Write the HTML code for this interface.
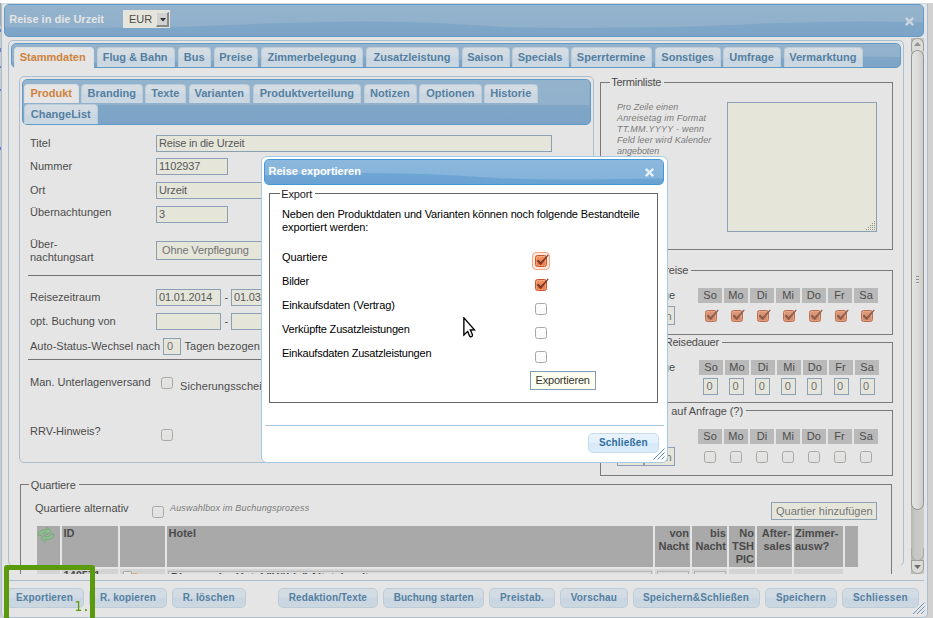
<!DOCTYPE html>
<html lang="de"><head><meta charset="utf-8"><title>Reise in die Urzeit</title><style>
*{box-sizing:border-box;margin:0;padding:0}
html,body{width:933px;height:618px;overflow:hidden}
body{position:relative;background:#fff;font-family:"Liberation Sans",sans-serif;font-size:11px;color:#222}
.a{position:absolute}
.t{white-space:nowrap;display:block}
.inp{background:#fffff0;border:1px solid #7f9db9}
.hdr{background:linear-gradient(#72a9d7,#6aa3d3);border:1px solid #4297d7;border-radius:5px;overflow:hidden}
.hdr i{position:absolute;left:0;top:0;right:0;bottom:0;background:linear-gradient(#8cb8dd,#83b1d9);filter:blur(.6px)}
.tab{background:linear-gradient(#e9f4fd 0%,#e2f0fc 48%,#d7e9f9 52%,#dbecfa 100%);border:1px solid #c5dbec;border-bottom:none;border-radius:4px 4px 0 0}
.tab.on{background:#fff;border-color:#f3f7fa}
.btn{background:linear-gradient(#e9f4fd 0%,#e2f0fc 48%,#d7e9f9 52%,#dbecfa 100%);border:1px solid #c5dbec;border-radius:5px}
.fs{border:1px solid #666}
.th{background:#a9a9a9}
.dh{background:#c0c0c0}
.cb{width:12px;height:12px;border:1px solid #aca8a2;border-radius:2.5px;background:linear-gradient(#fff,#f8f8f8)}
.cbo{width:12px;height:12px;border:1px solid #c8552b;border-radius:2.5px;background:linear-gradient(#f4956a,#ec7845);box-shadow:inset 0 0 0 1px rgba(255,190,150,.45)}
</style></head><body>
<div class="a" style="left:0px;top:3px;width:933px;height:615px;background:#e3e3e3"></div>
<div class="a" style="left:0px;top:3px;width:1px;height:615px;background:linear-gradient(#a7a7a7 0,#a7a7a7 22px,#dadada 24px,#dadada 100%)"></div>
<div class="a" style="left:0px;top:29px;width:1px;height:3px;background:#5a66d8"></div>
<div class="a" style="left:0px;top:48px;width:1px;height:4px;background:#5a66d8"></div>
<div class="a" style="left:0px;top:66px;width:1px;height:2px;background:#5a66d8"></div>
<div class="a" style="left:0px;top:89px;width:1px;height:2px;background:#5a66d8"></div>
<div class="a" style="left:0px;top:147px;width:1px;height:3px;background:#5a66d8"></div>
<div class="a" id="dlg" style="left:1px;top:3px;width:927px;height:615px;border:1px solid #a6c9e2;border-top-color:#e4edf5;border-radius:3px 3px 5px 5px;background:#fff;overflow:hidden"></div>
<div class="a hdr" style="left:4px;top:4px;width:920px;height:33px;"><i style="clip-path:polygon(0 0,100% 0,100.0% 17.5px,97.8% 17.0px,95.7% 16.7px,93.5% 16.5px,91.3% 16.7px,89.1% 16.9px,87.0% 17.4px,84.8% 17.9px,82.6% 18.6px,80.4% 19.4px,78.3% 20.3px,76.1% 21.0px,73.9% 21.7px,71.7% 22.0px,69.6% 22.3px,67.4% 22.5px,65.2% 22.7px,63.0% 22.9px,60.9% 23.0px,58.7% 22.8px,56.5% 22.4px,54.3% 21.9px,52.2% 20.8px,50.0% 19.5px,47.8% 18.4px,45.7% 17.5px,43.5% 17.0px,41.3% 16.7px,39.1% 16.5px,37.0% 16.7px,34.8% 16.9px,32.6% 17.4px,30.4% 17.9px,28.3% 18.6px,26.1% 19.4px,23.9% 20.3px,21.7% 21.0px,19.6% 21.7px,17.4% 22.0px,15.2% 22.3px,13.0% 22.5px,10.9% 22.7px,8.7% 22.9px,6.5% 23.0px,4.3% 22.8px,2.2% 22.4px,0.0% 21.9px)"></i></div>
<span class="a t" style="left: 9.2px; top: 14px; font-size: 11px; line-height: 11px; height: 11px; font-weight: bold; color: rgb(255, 255, 255); letter-spacing: 0.002px;">Reise in die Urzeit</span>
<div class="a" style="left:123px;top:10px;width:47px;height:18px;background:#fffff0;border:1px solid #fffff8"></div>
<span class="a t" style="left: 129px; top: 14px; font-size: 11px; line-height: 11px; height: 11px; color: rgb(34, 34, 34); letter-spacing: -0.005px;">EUR</span>
<div class="a" style="left:156px;top:12px;width:13px;height:14.6px;background:#e2e2e2;border-style:solid;border-width:1px 2px 2px 1px;border-color:#fff #7a7a7a #7a7a7a #fff"></div>
<svg class="a" style="left:159.5px;top:18px" width="6" height="4"><path d="M0 0h6L3 3.4z" fill="#000"></path></svg>
<svg class="a" style="left:904px;top:16px" width="11" height="11" viewBox="0 0 11 11"><path d="M1.8 1.8L9.2 9.2M9.2 1.8L1.8 9.2" stroke="#d8e7f3" stroke-width="2.5" stroke-linecap="butt"></path></svg>
<div class="a" id="sc" style="left:0;top:38px;width:911px;height:536px;overflow:hidden"><div class="a" style="left:0;top:-38px;width:933px;height:700px">
<div class="a" style="left:8px;top:40px;width:896px;height:526px;border:1px solid #a6c9e2;border-radius:5px"></div>
<div class="a" style="left:11px;top:560px;width:890px;height:8px;background:#fff"></div>
<div class="a hdr" style="left:11px;top:43px;width:890px;height:25px;"><i style="clip-path:polygon(0 0,100% 0,100.0% 13.1px,97.7% 12.8px,95.5% 12.5px,93.2% 12.7px,90.9% 12.8px,88.6% 13.3px,86.4% 13.8px,84.1% 14.5px,81.8% 15.3px,79.5% 16.1px,77.3% 16.9px,75.0% 17.6px,72.7% 18.0px,70.5% 18.3px,68.2% 18.5px,65.9% 18.7px,63.6% 18.8px,61.4% 19.0px,59.1% 18.8px,56.8% 18.4px,54.5% 17.9px,52.3% 16.8px,50.0% 15.5px,47.7% 14.4px,45.5% 13.5px,43.2% 13.0px,40.9% 12.7px,38.6% 12.6px,36.4% 12.7px,34.1% 13.0px,31.8% 13.5px,29.5% 14.0px,27.3% 14.7px,25.0% 15.5px,22.7% 16.4px,20.5% 17.1px,18.2% 17.8px,15.9% 18.1px,13.6% 18.4px,11.4% 18.6px,9.1% 18.7px,6.8% 18.9px,4.5% 18.9px,2.3% 18.8px,0.0% 18.3px)"></i></div>
<div class="a tab on" style="left:14.1px;top:47px;width:79.9px;height:21px;"></div>
<span class="a t" style="left: 19.68px; top: 51.5px; font-size: 11px; line-height: 11px; height: 11px; font-weight: bold; color: rgb(225, 112, 9); letter-spacing: 0px;">Stammdaten</span>
<div class="a tab" style="left:96.6px;top:47px;width:78.2px;height:20px;"></div>
<span class="a t" style="left: 102.81px; top: 51.5px; font-size: 11px; line-height: 11px; height: 11px; font-weight: bold; color: rgb(46, 110, 158); letter-spacing: 0px;">Flug &amp; Bahn</span>
<div class="a tab" style="left:178px;top:47px;width:33.3px;height:20px;"></div>
<span class="a t" style="left: 183.76px; top: 51.5px; font-size: 11px; line-height: 11px; height: 11px; font-weight: bold; color: rgb(46, 110, 158); letter-spacing: 0px;">Bus</span>
<div class="a tab" style="left:214.1px;top:47px;width:44.4px;height:20px;"></div>
<span class="a t" style="left: 219.27px; top: 51.5px; font-size: 11px; line-height: 11px; height: 11px; font-weight: bold; color: rgb(46, 110, 158); letter-spacing: 0.005px;">Preise</span>
<div class="a tab" style="left:261.2px;top:47px;width:102.3px;height:20px;"></div>
<span class="a t" style="left: 267.52px; top: 51.5px; font-size: 11px; line-height: 11px; height: 11px; font-weight: bold; color: rgb(46, 110, 158); letter-spacing: 0.002px;">Zimmerbelegung</span>
<div class="a tab" style="left:366.3px;top:47px;width:92.4px;height:20px;"></div>
<span class="a t" style="left: 373.48px; top: 51.5px; font-size: 11px; line-height: 11px; height: 11px; font-weight: bold; color: rgb(46, 110, 158); letter-spacing: 0.001px;">Zusatzleistung</span>
<div class="a tab" style="left:461.5px;top:47px;width:48.4px;height:20px;"></div>
<span class="a t" style="left: 467.15px; top: 51.5px; font-size: 11px; line-height: 11px; height: 11px; font-weight: bold; color: rgb(46, 110, 158); letter-spacing: 0.002px;">Saison</span>
<div class="a tab" style="left:512.4px;top:47px;width:56.4px;height:20px;"></div>
<span class="a t" style="left: 517.76px; top: 51.5px; font-size: 11px; line-height: 11px; height: 11px; font-weight: bold; color: rgb(46, 110, 158); letter-spacing: 0.006px;">Specials</span>
<div class="a tab" style="left:571.3px;top:47px;width:80.6px;height:20px;"></div>
<span class="a t" style="left: 576.85px; top: 51.5px; font-size: 11px; line-height: 11px; height: 11px; font-weight: bold; color: rgb(46, 110, 158); letter-spacing: 0.001px;">Sperrtermine</span>
<div class="a tab" style="left:654.9px;top:47px;width:66.5px;height:20px;"></div>
<span class="a t" style="left: 661.35px; top: 51.5px; font-size: 11px; line-height: 11px; height: 11px; font-weight: bold; color: rgb(46, 110, 158); letter-spacing: 0.001px;">Sonstiges</span>
<div class="a tab" style="left:723.2px;top:47px;width:57.9px;height:20px;"></div>
<span class="a t" style="left: 729.34px; top: 51.5px; font-size: 11px; line-height: 11px; height: 11px; font-weight: bold; color: rgb(46, 110, 158); letter-spacing: -0.001px;">Umfrage</span>
<div class="a tab" style="left:783.6px;top:47px;width:79.4px;height:20px;"></div>
<span class="a t" style="left: 789.17px; top: 51.5px; font-size: 11px; line-height: 11px; height: 11px; font-weight: bold; color: rgb(46, 110, 158); letter-spacing: 0.002px;">Vermarktung</span>
<div class="a" style="left:19px;top:76px;width:575px;height:387px;border:1px solid #a6c9e2;border-radius:5px"></div>
<div class="a hdr" style="left:21.5px;top:79px;width:569px;height:46px;"><i style="clip-path:polygon(0 0,100% 0,100.0% 25.0px,96.4% 25.0px,92.9% 25.0px,89.3% 25.0px,85.7% 25.0px,82.1% 25.0px,78.6% 25.0px,75.0% 25.0px,71.4% 25.0px,67.9% 25.0px,64.3% 25.0px,60.7% 25.0px,57.1% 25.0px,53.6% 25.0px,50.0% 25.0px,46.4% 25.0px,42.9% 25.0px,39.3% 25.0px,35.7% 25.0px,32.1% 25.0px,28.6% 25.0px,25.0% 25.0px,21.4% 25.0px,17.9% 25.0px,14.3% 25.0px,10.7% 25.0px,7.1% 25.0px,3.6% 25.0px,0.0% 25.0px)"></i></div>
<div class="a tab on" style="left:24.4px;top:84.4px;width:54.2px;height:18.6px;"></div>
<span class="a t" style="left: 30.42px; top: 87.6px; font-size: 11px; line-height: 11px; height: 11px; font-weight: bold; color: rgb(225, 112, 9); letter-spacing: 0px;">Produkt</span>
<div class="a tab" style="left:81.1px;top:84.4px;width:61.9px;height:18.6px;"></div>
<span class="a t" style="left: 87.61px; top: 87.6px; font-size: 11px; line-height: 11px; height: 11px; font-weight: bold; color: rgb(46, 110, 158); letter-spacing: 0px;">Branding</span>
<div class="a tab" style="left:145.3px;top:84.4px;width:40.6px;height:18.6px;"></div>
<span class="a t" style="left: 151.33px; top: 87.6px; font-size: 11px; line-height: 11px; height: 11px; font-weight: bold; color: rgb(46, 110, 158); letter-spacing: 0.004px;">Texte</span>
<div class="a tab" style="left:188.9px;top:84.4px;width:61.3px;height:18.6px;"></div>
<span class="a t" style="left: 194.48px; top: 87.6px; font-size: 11px; line-height: 11px; height: 11px; font-weight: bold; color: rgb(46, 110, 158); letter-spacing: 0.002px;">Varianten</span>
<div class="a tab" style="left:253.2px;top:84.4px;width:107.8px;height:18.6px;"></div>
<span class="a t" style="left: 259.72px; top: 87.6px; font-size: 11px; line-height: 11px; height: 11px; font-weight: bold; color: rgb(46, 110, 158); letter-spacing: 0.002px;">Produktverteilung</span>
<div class="a tab" style="left:363.5px;top:84.4px;width:53.4px;height:18.6px;"></div>
<span class="a t" style="left: 370.04px; top: 87.6px; font-size: 11px; line-height: 11px; height: 11px; font-weight: bold; color: rgb(46, 110, 158); letter-spacing: -0.002px;">Notizen</span>
<div class="a tab" style="left:419.4px;top:84.4px;width:62.5px;height:18.6px;"></div>
<span class="a t" style="left: 426.21px; top: 87.6px; font-size: 11px; line-height: 11px; height: 11px; font-weight: bold; color: rgb(46, 110, 158); letter-spacing: 0px;">Optionen</span>
<div class="a tab" style="left:484.4px;top:84.4px;width:53.4px;height:18.6px;"></div>
<span class="a t" style="left: 490.32px; top: 87.6px; font-size: 11px; line-height: 11px; height: 11px; font-weight: bold; color: rgb(46, 110, 158); letter-spacing: 0px;">Historie</span>
<div class="a tab" style="left:24.4px;top:104px;width:73.3px;height:19.5px;"></div>
<span class="a t" style="left: 30.8px; top: 108.7px; font-size: 11px; line-height: 11px; height: 11px; font-weight: bold; color: rgb(46, 110, 158); letter-spacing: 0px;">ChangeList</span>
<span class="a t" style="left: 30px; top: 138px; font-size: 11px; line-height: 11px; height: 11px; letter-spacing: 0.001px;">Titel</span>
<div class="a inp" style="left:156px;top:135px;width:396px;height:17px;"></div><span class="a t" style="left: 159px; top: 137.8px; font-size: 11px; line-height: 11px; height: 11px; color: rgb(51, 51, 51); letter-spacing: -0.209px;">Reise in die Urzeit</span>
<span class="a t" style="left: 30px; top: 161px; font-size: 11px; line-height: 11px; height: 11px; letter-spacing: -0.002px;">Nummer</span>
<div class="a inp" style="left:156px;top:158px;width:72px;height:17px;"></div><span class="a t" style="left: 159px; top: 160.8px; font-size: 11px; line-height: 11px; height: 11px; color: rgb(51, 51, 51); letter-spacing: -0.118px;">1102937</span>
<span class="a t" style="left: 30px; top: 185px; font-size: 11px; line-height: 11px; height: 11px; letter-spacing: 0px;">Ort</span>
<div class="a inp" style="left:156px;top:182px;width:396px;height:17px;"></div><span class="a t" style="left: 159px; top: 184.8px; font-size: 11px; line-height: 11px; height: 11px; color: rgb(51, 51, 51); letter-spacing: -0.122px;">Urzeit</span>
<span class="a t" style="left: 30px; top: 207px; font-size: 11px; line-height: 11px; height: 11px; letter-spacing: 0.005px;">Übernachtungen</span>
<div class="a inp" style="left:156px;top:206px;width:72px;height:17px;"></div><span class="a t" style="left: 159px; top: 208.8px; font-size: 11px; line-height: 11px; height: 11px; color: rgb(51, 51, 51); letter-spacing: -0.125px;">3</span>
<span class="a t" style="left: 30px; top: 239px; font-size: 11px; line-height: 11px; height: 11px; letter-spacing: -0.003px;">Über-</span>
<span class="a t" style="left: 30px; top: 251.5px; font-size: 11px; line-height: 11px; height: 11px; letter-spacing: 0.004px;">nachtungsart</span>
<div class="a inp" style="left:156px;top:241px;width:200px;height:19px;"></div>
<span class="a t" style="left: 162px; top: 245px; font-size: 11px; line-height: 11px; height: 11px; color: rgb(90, 90, 90); letter-spacing: -0.125px;">Ohne Verpflegung</span>
<div class="a" style="left:28px;top:275px;width:562px;height:1px;background:#5c5c5c"></div>
<span class="a t" style="left: 30px; top: 292px; font-size: 11px; line-height: 11px; height: 11px; letter-spacing: 0px;">Reisezeitraum</span>
<div class="a inp" style="left:156px;top:289px;width:65px;height:17px;"></div><span class="a t" style="left: 159px; top: 291.8px; font-size: 11px; line-height: 11px; height: 11px; color: rgb(51, 51, 51); letter-spacing: -0.176px;">01.01.2014</span>
<span class="a t" style="left: 224.5px; top: 292px; font-size: 11px; line-height: 11px; height: 11px; letter-spacing: -0.012px;">-</span>
<div class="a inp" style="left:231px;top:289px;width:65px;height:17px;"></div><span class="a t" style="left: 234px; top: 291.8px; font-size: 11px; line-height: 11px; height: 11px; color: rgb(51, 51, 51); letter-spacing: -0.176px;">01.03.2014</span>
<span class="a t" style="left: 30px; top: 316px; font-size: 11px; line-height: 11px; height: 11px; letter-spacing: 0.006px;">opt. Buchung von</span>
<div class="a inp" style="left:156px;top:313px;width:65px;height:17px;"></div>
<span class="a t" style="left: 224.5px; top: 316px; font-size: 11px; line-height: 11px; height: 11px; letter-spacing: -0.012px;">-</span>
<div class="a inp" style="left:231px;top:313px;width:65px;height:17px;"></div>
<span class="a t" style="left: 30px; top: 341px; font-size: 11px; line-height: 11px; height: 11px; letter-spacing: 0.003px;">Auto-Status-Wechsel nach</span>
<div class="a inp" style="left:163px;top:338px;width:18px;height:17px;"></div><span class="a t" style="left: 167px; top: 340.8px; font-size: 11px; line-height: 11px; height: 11px; color: rgb(85, 85, 85); letter-spacing: -0.125px;">0</span>
<span class="a t" style="left: 184.5px; top: 341px; font-size: 11px; line-height: 11px; height: 11px; letter-spacing: 0.006px;">Tagen bezogen</span>
<div class="a" style="left:28px;top:359px;width:562px;height:1px;background:#5c5c5c"></div>
<span class="a t" style="left: 30px; top: 376.5px; font-size: 11px; line-height: 11px; height: 11px; letter-spacing: 0.003px;">Man. Unterlagenversand</span>
<div class="a cb" style="left:161px;top:377px;width:12px;height:12px;"></div>
<span class="a t" style="left: 180px; top: 381px; font-size: 11px; line-height: 11px; height: 11px; letter-spacing: 0.072px;">Sicherungsschein</span>
<span class="a t" style="left: 30px; top: 426px; font-size: 11px; line-height: 11px; height: 11px; letter-spacing: -0.002px;">RRV-Hinweis?</span>
<div class="a cb" style="left:161px;top:429px;width:12px;height:12px;"></div>
<div class="a fs" style="left:600px;top:82px;width:293px;height:168px;"></div><div class="a" style="left:609.5px;top:76px;width:54.5px;height:13px;background:#fff"></div><span class="a t" style="left: 611.2px; top: 77px; font-size: 11px; line-height: 11px; height: 11px; letter-spacing: -0.234px;">Terminliste</span>
<span class="a t" style="left: 617px; top: 102.5px; font-size: 9px; line-height: 9px; height: 9px; font-style: italic; color: rgb(102, 102, 102); letter-spacing: 0.05px;">Pro Zeile einen</span>
<span class="a t" style="left: 617px; top: 113.5px; font-size: 9px; line-height: 9px; height: 9px; font-style: italic; color: rgb(102, 102, 102); letter-spacing: 0.163px;">Anreisetag im Format</span>
<span class="a t" style="left: 617px; top: 124.5px; font-size: 9px; line-height: 9px; height: 9px; font-style: italic; color: rgb(102, 102, 102); letter-spacing: 0.223px;">TT.MM.YYYY - wenn</span>
<span class="a t" style="left: 617px; top: 135.5px; font-size: 9px; line-height: 9px; height: 9px; font-style: italic; color: rgb(102, 102, 102); letter-spacing: 0.076px;">Feld leer wird Kalender</span>
<span class="a t" style="left: 617px; top: 146.5px; font-size: 9px; line-height: 9px; height: 9px; font-style: italic; color: rgb(102, 102, 102); letter-spacing: -0.027px;">angeboten</span>
<div class="a inp" style="left:727px;top:102px;width:150px;height:130px;"></div>
<svg class="a" style="left:866px;top:221px" width="10" height="10"><g fill="#8a8a80"><rect x="8" y="0" width="1" height="1"></rect><rect x="6" y="2" width="1" height="1"></rect><rect x="8" y="2" width="1" height="1"></rect><rect x="4" y="4" width="1" height="1"></rect><rect x="6" y="4" width="1" height="1"></rect><rect x="8" y="4" width="1" height="1"></rect><rect x="2" y="6" width="1" height="1"></rect><rect x="4" y="6" width="1" height="1"></rect><rect x="6" y="6" width="1" height="1"></rect><rect x="8" y="6" width="1" height="1"></rect><rect x="0" y="8" width="1" height="1"></rect><rect x="2" y="8" width="1" height="1"></rect><rect x="4" y="8" width="1" height="1"></rect><rect x="6" y="8" width="1" height="1"></rect><rect x="8" y="8" width="1" height="1"></rect></g></svg>
<div class="a fs" style="left:600px;top:270px;width:293px;height:65px;"></div><div class="a" style="left:650.6px;top:264px;width:40.5px;height:13px;background:#fff"></div><span class="a t" style="left: 652.3px; top: 265px; font-size: 11px; line-height: 11px; height: 11px; letter-spacing: -0.185px;">Anreise</span>
<span class="a t" style="left: 651.22px; top: 290px; font-size: 11px; line-height: 11px; height: 11px; letter-spacing: 0.005px;">Tage</span>
<div class="a inp" style="left:617px;top:306px;width:58px;height:19px;"></div><span class="a t" style="left: 665.5px; top: 310.8px; font-size: 11px; line-height: 11px; height: 11px; color: rgb(85, 85, 85); letter-spacing: -0.125px;">n</span>
<div class="a dh" style="left:698px;top:288px;width:24px;height:15px;"></div><span class="a t" style="left: 703.3px; top: 289.7px; font-size: 11px; line-height: 11px; height: 11px; letter-spacing: 0.001px;">So</span><div class="a dh" style="left:724px;top:288px;width:24px;height:15px;"></div><span class="a t" style="left: 728.3px; top: 289.7px; font-size: 11px; line-height: 11px; height: 11px; letter-spacing: -0.001px;">Mo</span><div class="a dh" style="left:750px;top:288px;width:24px;height:15px;"></div><span class="a t" style="left: 756.8px; top: 289.7px; font-size: 11px; line-height: 11px; height: 11px; letter-spacing: -0.005px;">Di</span><div class="a dh" style="left:776px;top:288px;width:24px;height:15px;"></div><span class="a t" style="left: 782.3px; top: 289.7px; font-size: 11px; line-height: 11px; height: 11px; letter-spacing: -0.01px;">Mi</span><div class="a dh" style="left:802px;top:288px;width:24px;height:15px;"></div><span class="a t" style="left: 806.8px; top: 289.7px; font-size: 11px; line-height: 11px; height: 11px; letter-spacing: -0.001px;">Do</span><div class="a dh" style="left:828px;top:288px;width:24px;height:15px;"></div><span class="a t" style="left: 834.3px; top: 289.7px; font-size: 11px; line-height: 11px; height: 11px; letter-spacing: -0.005px;">Fr</span><div class="a dh" style="left:854px;top:288px;width:24px;height:15px;"></div><span class="a t" style="left: 859.3px; top: 289.7px; font-size: 11px; line-height: 11px; height: 11px; letter-spacing: 0.001px;">Sa</span>
<div class="a cbo" style="left:705px;top:310px;width:12px;height:12px;"><svg width="16" height="14" viewBox="0 -2 16 14" style="position:absolute;left:-1px;top:-3px;overflow:visible"><path d="M1.5 6.1L3.2 4.4L5.6 7.1L12.9 -0.6L13.7 0.2L5.8 10.2Z" fill="#7d3b27"></path></svg></div>
<div class="a cbo" style="left:731px;top:310px;width:12px;height:12px;"><svg width="16" height="14" viewBox="0 -2 16 14" style="position:absolute;left:-1px;top:-3px;overflow:visible"><path d="M1.5 6.1L3.2 4.4L5.6 7.1L12.9 -0.6L13.7 0.2L5.8 10.2Z" fill="#7d3b27"></path></svg></div>
<div class="a cbo" style="left:757px;top:310px;width:12px;height:12px;"><svg width="16" height="14" viewBox="0 -2 16 14" style="position:absolute;left:-1px;top:-3px;overflow:visible"><path d="M1.5 6.1L3.2 4.4L5.6 7.1L12.9 -0.6L13.7 0.2L5.8 10.2Z" fill="#7d3b27"></path></svg></div>
<div class="a cbo" style="left:783px;top:310px;width:12px;height:12px;"><svg width="16" height="14" viewBox="0 -2 16 14" style="position:absolute;left:-1px;top:-3px;overflow:visible"><path d="M1.5 6.1L3.2 4.4L5.6 7.1L12.9 -0.6L13.7 0.2L5.8 10.2Z" fill="#7d3b27"></path></svg></div>
<div class="a cbo" style="left:809px;top:310px;width:12px;height:12px;"><svg width="16" height="14" viewBox="0 -2 16 14" style="position:absolute;left:-1px;top:-3px;overflow:visible"><path d="M1.5 6.1L3.2 4.4L5.6 7.1L12.9 -0.6L13.7 0.2L5.8 10.2Z" fill="#7d3b27"></path></svg></div>
<div class="a cbo" style="left:835px;top:310px;width:12px;height:12px;"><svg width="16" height="14" viewBox="0 -2 16 14" style="position:absolute;left:-1px;top:-3px;overflow:visible"><path d="M1.5 6.1L3.2 4.4L5.6 7.1L12.9 -0.6L13.7 0.2L5.8 10.2Z" fill="#7d3b27"></path></svg></div>
<div class="a cbo" style="left:861px;top:310px;width:12px;height:12px;"><svg width="16" height="14" viewBox="0 -2 16 14" style="position:absolute;left:-1px;top:-3px;overflow:visible"><path d="M1.5 6.1L3.2 4.4L5.6 7.1L12.9 -0.6L13.7 0.2L5.8 10.2Z" fill="#7d3b27"></path></svg></div>
<div class="a fs" style="left:600px;top:342px;width:293px;height:61px;"></div><div class="a" style="left:663px;top:336px;width:58.8px;height:13px;background:#fff"></div><span class="a t" style="left: 664.7px; top: 337.2px; font-size: 11px; line-height: 11px; height: 11px; letter-spacing: -0.197px;">Reisedauer</span>
<span class="a t" style="left: 651.22px; top: 362px; font-size: 11px; line-height: 11px; height: 11px; letter-spacing: 0.005px;">Tage</span>
<div class="a dh" style="left:699px;top:360px;width:24px;height:15px;"></div><span class="a t" style="left: 704.3px; top: 361.7px; font-size: 11px; line-height: 11px; height: 11px; letter-spacing: 0.001px;">So</span><div class="a dh" style="left:725px;top:360px;width:24px;height:15px;"></div><span class="a t" style="left: 729.3px; top: 361.7px; font-size: 11px; line-height: 11px; height: 11px; letter-spacing: -0.001px;">Mo</span><div class="a dh" style="left:751px;top:360px;width:24px;height:15px;"></div><span class="a t" style="left: 757.8px; top: 361.7px; font-size: 11px; line-height: 11px; height: 11px; letter-spacing: -0.005px;">Di</span><div class="a dh" style="left:777px;top:360px;width:24px;height:15px;"></div><span class="a t" style="left: 783.3px; top: 361.7px; font-size: 11px; line-height: 11px; height: 11px; letter-spacing: -0.01px;">Mi</span><div class="a dh" style="left:803px;top:360px;width:24px;height:15px;"></div><span class="a t" style="left: 807.8px; top: 361.7px; font-size: 11px; line-height: 11px; height: 11px; letter-spacing: -0.001px;">Do</span><div class="a dh" style="left:829px;top:360px;width:24px;height:15px;"></div><span class="a t" style="left: 835.3px; top: 361.7px; font-size: 11px; line-height: 11px; height: 11px; letter-spacing: -0.005px;">Fr</span><div class="a dh" style="left:855px;top:360px;width:24px;height:15px;"></div><span class="a t" style="left: 860.3px; top: 361.7px; font-size: 11px; line-height: 11px; height: 11px; letter-spacing: 0.001px;">Sa</span>
<div class="a inp" style="left:703.0px;top:378px;width:15px;height:17px;"></div><span class="a t" style="left: 706.5px; top: 380.8px; font-size: 11px; line-height: 11px; height: 11px; color: rgb(85, 85, 85); letter-spacing: -0.125px;">0</span>
<div class="a inp" style="left:729.1px;top:378px;width:15px;height:17px;"></div><span class="a t" style="left: 732.6px; top: 380.8px; font-size: 11px; line-height: 11px; height: 11px; color: rgb(85, 85, 85); letter-spacing: -0.125px;">0</span>
<div class="a inp" style="left:755.2px;top:378px;width:15px;height:17px;"></div><span class="a t" style="left: 758.7px; top: 380.8px; font-size: 11px; line-height: 11px; height: 11px; color: rgb(85, 85, 85); letter-spacing: -0.125px;">0</span>
<div class="a inp" style="left:781.3px;top:378px;width:15px;height:17px;"></div><span class="a t" style="left: 784.8px; top: 380.8px; font-size: 11px; line-height: 11px; height: 11px; color: rgb(85, 85, 85); letter-spacing: -0.125px;">0</span>
<div class="a inp" style="left:807.4px;top:378px;width:15px;height:17px;"></div><span class="a t" style="left: 810.9px; top: 380.8px; font-size: 11px; line-height: 11px; height: 11px; color: rgb(85, 85, 85); letter-spacing: -0.125px;">0</span>
<div class="a inp" style="left:833.5px;top:378px;width:15px;height:17px;"></div><span class="a t" style="left: 837px; top: 380.8px; font-size: 11px; line-height: 11px; height: 11px; color: rgb(85, 85, 85); letter-spacing: -0.125px;">0</span>
<div class="a inp" style="left:859.6px;top:378px;width:15px;height:17px;"></div><span class="a t" style="left: 863.1px; top: 380.8px; font-size: 11px; line-height: 11px; height: 11px; color: rgb(85, 85, 85); letter-spacing: -0.125px;">0</span>
<div class="a fs" style="left:600px;top:410px;width:293px;height:66px;"></div><div class="a" style="left:611.6px;top:404px;width:134.190625px;height:13px;background:#fff"></div><span class="a t" style="left: 671.3px; top: 405.5px; font-size: 11px; line-height: 11px; height: 11px; letter-spacing: -0.073px;">auf Anfrage (?)</span>
<div class="a dh" style="left:698px;top:429px;width:24px;height:15px;"></div><span class="a t" style="left: 703.3px; top: 430.7px; font-size: 11px; line-height: 11px; height: 11px; letter-spacing: 0.001px;">So</span><div class="a dh" style="left:724px;top:429px;width:24px;height:15px;"></div><span class="a t" style="left: 728.3px; top: 430.7px; font-size: 11px; line-height: 11px; height: 11px; letter-spacing: -0.001px;">Mo</span><div class="a dh" style="left:750px;top:429px;width:24px;height:15px;"></div><span class="a t" style="left: 756.8px; top: 430.7px; font-size: 11px; line-height: 11px; height: 11px; letter-spacing: -0.005px;">Di</span><div class="a dh" style="left:776px;top:429px;width:24px;height:15px;"></div><span class="a t" style="left: 782.3px; top: 430.7px; font-size: 11px; line-height: 11px; height: 11px; letter-spacing: -0.01px;">Mi</span><div class="a dh" style="left:802px;top:429px;width:24px;height:15px;"></div><span class="a t" style="left: 806.8px; top: 430.7px; font-size: 11px; line-height: 11px; height: 11px; letter-spacing: -0.001px;">Do</span><div class="a dh" style="left:828px;top:429px;width:24px;height:15px;"></div><span class="a t" style="left: 834.3px; top: 430.7px; font-size: 11px; line-height: 11px; height: 11px; letter-spacing: -0.005px;">Fr</span><div class="a dh" style="left:854px;top:429px;width:24px;height:15px;"></div><span class="a t" style="left: 859.3px; top: 430.7px; font-size: 11px; line-height: 11px; height: 11px; letter-spacing: 0.001px;">Sa</span>
<div class="a cb" style="left:704px;top:451px;width:12px;height:12px;"></div>
<div class="a cb" style="left:730px;top:451px;width:12px;height:12px;"></div>
<div class="a cb" style="left:756px;top:451px;width:12px;height:12px;"></div>
<div class="a cb" style="left:782px;top:451px;width:12px;height:12px;"></div>
<div class="a cb" style="left:808px;top:451px;width:12px;height:12px;"></div>
<div class="a cb" style="left:834px;top:451px;width:12px;height:12px;"></div>
<div class="a cb" style="left:860px;top:451px;width:12px;height:12px;"></div>
<div class="a inp" style="left:617px;top:447px;width:27px;height:19px;"></div>
<div class="a inp" style="left:644px;top:447px;width:31px;height:19px;"></div><span class="a t" style="left: 665.5px; top: 451.8px; font-size: 11px; line-height: 11px; height: 11px; color: rgb(85, 85, 85); letter-spacing: -0.125px;">n</span>
<div class="a fs" style="left:20px;top:484px;width:872px;height:120px;"></div><div class="a" style="left:29px;top:478px;width:49.5px;height:13px;background:#fff"></div><span class="a t" style="left: 30.7px; top: 480px; font-size: 11px; line-height: 11px; height: 11px; letter-spacing: -0.095px;">Quartiere</span>
<span class="a t" style="left: 35px; top: 503px; font-size: 11px; line-height: 11px; height: 11px; letter-spacing: 0.002px;">Quartiere alternativ</span>
<div class="a cb" style="left:152px;top:506px;width:12px;height:12px;"></div>
<span class="a t" style="left: 170px; top: 503.5px; font-size: 9px; line-height: 9px; height: 9px; font-style: italic; color: rgb(102, 102, 102); letter-spacing: 0.163px;">Auswahlbox im Buchungsprozess</span>
<div class="a inp" style="left:771px;top:502px;width:106px;height:18px;"></div>
<span class="a t" style="left: 776px; top: 506px; font-size: 11px; line-height: 11px; height: 11px; color: rgb(96, 96, 96); letter-spacing: 0.003px;">Quartier hinzufügen</span>
<div class="a th" style="left:37.3px;top:526px;width:22.7px;height:41px;"></div>
<div class="a" style="left:37.3px;top:568.5px;width:22.7px;height:20px;background:#e6e6e6"></div>
<div class="a th" style="left:62.2px;top:526px;width:55.8px;height:41px;"></div>
<div class="a" style="left:62.2px;top:568.5px;width:55.8px;height:20px;background:#e6e6e6"></div>
<div class="a th" style="left:120.2px;top:526px;width:44.8px;height:41px;"></div>
<div class="a" style="left:120.2px;top:568.5px;width:44.8px;height:20px;background:#e6e6e6"></div>
<div class="a th" style="left:167px;top:526px;width:486.2px;height:41px;"></div>
<div class="a" style="left:167px;top:568.5px;width:486.2px;height:20px;background:#e6e6e6"></div>
<div class="a th" style="left:655.2px;top:526px;width:35.0px;height:41px;"></div>
<div class="a" style="left:655.2px;top:568.5px;width:35.0px;height:20px;background:#e6e6e6"></div>
<div class="a th" style="left:692.2px;top:526px;width:34.8px;height:41px;"></div>
<div class="a" style="left:692.2px;top:568.5px;width:34.8px;height:20px;background:#e6e6e6"></div>
<div class="a th" style="left:729.2px;top:526px;width:25.8px;height:41px;"></div>
<div class="a" style="left:729.2px;top:568.5px;width:25.8px;height:20px;background:#e6e6e6"></div>
<div class="a th" style="left:757.2px;top:526px;width:34.8px;height:41px;"></div>
<div class="a" style="left:757.2px;top:568.5px;width:34.8px;height:20px;background:#e6e6e6"></div>
<div class="a th" style="left:794.2px;top:526px;width:48.6px;height:41px;"></div>
<div class="a" style="left:794.2px;top:568.5px;width:48.6px;height:20px;background:#e6e6e6"></div>
<div class="a th" style="left:845.4px;top:526px;width:12.6px;height:41px;"></div>
<span class="a t" style="left: 63.5px; top: 527.5px; font-size: 11px; line-height: 11px; height: 11px; font-weight: bold; letter-spacing: 0px;">ID</span>
<span class="a t" style="left: 168.5px; top: 527.5px; font-size: 11px; line-height: 11px; height: 11px; font-weight: bold; letter-spacing: 0px;">Hotel</span>
<span class="a t" style="left: 669.44px; top: 527.5px; font-size: 11px; line-height: 11px; height: 11px; font-weight: bold; letter-spacing: -0.001px;">von</span>
<span class="a t" style="left: 658.44px; top: 540.5px; font-size: 11px; line-height: 11px; height: 11px; font-weight: bold; letter-spacing: -0.001px;">Nacht</span>
<span class="a t" style="left: 710.09px; top: 527.5px; font-size: 11px; line-height: 11px; height: 11px; font-weight: bold; letter-spacing: 0.001px;">bis</span>
<span class="a t" style="left: 695.44px; top: 540.5px; font-size: 11px; line-height: 11px; height: 11px; font-weight: bold; letter-spacing: -0.001px;">Nacht</span>
<span class="a t" style="left: 739.34px; top: 527.5px; font-size: 11px; line-height: 11px; height: 11px; font-weight: bold; letter-spacing: -0.006px;">No</span>
<span class="a t" style="left: 732px; top: 540.5px; font-size: 11px; line-height: 11px; height: 11px; font-weight: bold; letter-spacing: 0px;">TSH</span>
<span class="a t" style="left: 735.66px; top: 553.5px; font-size: 11px; line-height: 11px; height: 11px; font-weight: bold; letter-spacing: -0.001px;">PIC</span>
<span class="a t" style="left: 761.69px; top: 527.5px; font-size: 11px; line-height: 11px; height: 11px; font-weight: bold; letter-spacing: -0.006px;">After-</span>
<span class="a t" style="left: 763.44px; top: 540.5px; font-size: 11px; line-height: 11px; height: 11px; font-weight: bold; letter-spacing: 0.006px;">sales</span>
<span class="a t" style="left: 795px; top: 527.5px; font-size: 11px; line-height: 11px; height: 11px; font-weight: bold; letter-spacing: 0.001px;">Zimmer-</span>
<span class="a t" style="left: 795px; top: 540.5px; font-size: 11px; line-height: 11px; height: 11px; font-weight: bold; letter-spacing: 0.003px;">ausw?</span>
<svg class="a" style="left:37px;top:527px" width="18" height="17" viewBox="0 0 18 17"><g fill="#80c785" stroke="#58a55e" stroke-width=".8" stroke-linejoin="round"><path d="M1 8.2C1.4 4.6 4 2.6 10 2.9V0.4L14.2 4.2L10 8V5.9C6 5.7 4.6 6.6 4.1 8.6Z"></path><path d="M17 7.3C16.6 10.9 14 12.9 8 12.6V15.4L3.8 11.4L8 7.5V9.6C12 9.8 13.4 8.9 13.9 6.9Z"></path></g></svg>
<span class="a t" style="left: 63.5px; top: 569.6px; font-size: 11px; line-height: 11px; height: 11px; font-weight: bold; letter-spacing: 0.005px;">140571</span>
<div class="a" style="left:123px;top:571px;width:9px;height:11px;background:#fff;border:1px solid #a9a9a9;border-radius:1px"></div>
<div class="a" style="left:131.5px;top:572.5px;width:5px;height:6px;background:#e8a951;border-radius:1px"></div>
<div class="a" style="left:168px;top:571px;width:484px;height:17px;background:#f2f2f2;border:1px solid #b9b9b9"></div>
<span class="a t" style="left: 171px; top: 572.2px; font-size: 11px; line-height: 11px; height: 11px; font-weight: bold; color: rgb(17, 17, 17); letter-spacing: 0.002px;">Dinosaurier-Hotel "Höhle" Altsteinzeit</span>
<div class="a" style="left:657px;top:571px;width:32px;height:17px;background:#f2f2f2;border:1px solid #b9b9b9"></div>
<div class="a" style="left:694px;top:571px;width:32px;height:17px;background:#f2f2f2;border:1px solid #b9b9b9"></div>
</div></div>
<div class="a" style="left:911px;top:38px;width:13px;height:536px;background:linear-gradient(90deg,#bdbdbb,#d3d3d1 30%,#d9d9d7)"></div>
<div class="a" style="left:911px;top:38px;width:13px;height:13px;border:1px solid #9a9895;border-radius:6px 6px 0 0;background:#f0efed;border-bottom:none"></div>
<svg class="a" style="left:914px;top:42px" width="7" height="4"><path d="M3.5 0L7 4H0z" fill="#8a8a8a"></path></svg>
<div class="a" style="left:911px;top:50px;width:13px;height:460px;border:1px solid #8e8c88;border-radius:6.5px;background:linear-gradient(90deg,#fdfdfd,#f3f2f0 50%,#dddbd8)"></div>
<div class="a" style="left:916px;top:276px;width:3px;height:1px;background:#7e7e7e"></div>
<div class="a" style="left:916px;top:277px;width:3px;height:1px;background:#fff"></div>
<div class="a" style="left:916px;top:279px;width:3px;height:1px;background:#7e7e7e"></div>
<div class="a" style="left:916px;top:280px;width:3px;height:1px;background:#fff"></div>
<div class="a" style="left:916px;top:282px;width:3px;height:1px;background:#7e7e7e"></div>
<div class="a" style="left:916px;top:283px;width:3px;height:1px;background:#fff"></div>
<div class="a" style="left:911px;top:548px;width:13px;height:13px;border:1px solid #aaa8a4;border-top:none;border-radius:0 0 6.5px 6.5px"></div>
<div class="a" style="left:911px;top:560px;width:13px;height:14px;border:1px solid #9a9895;border-radius:0 0 6px 6px;background:#f0efed"></div>
<svg class="a" style="left:914px;top:565px" width="7" height="4"><path d="M0 0h7L3.5 4z" fill="#555"></path></svg>
<div class="a" style="left:4px;top:580px;width:920px;height:1px;background:#a6c9e2"></div>
<div class="a btn" style="left:5.6px;top:588px;width:78.0px;height:19.5px;"></div><span class="a t" style="left: 16px; top: 592.7px; font-size: 10px; line-height: 10px; height: 10px; font-weight: bold; color: rgb(46, 110, 158); letter-spacing: 0.129px;">Exportieren</span>
<div class="a btn" style="left:89.4px;top:588px;width:77.3px;height:19.5px;"></div><span class="a t" style="left: 99.95px; top: 592.7px; font-size: 10px; line-height: 10px; height: 10px; font-weight: bold; color: rgb(46, 110, 158); letter-spacing: 0.139px;">R. kopieren</span>
<div class="a btn" style="left:172px;top:588px;width:73.6px;height:19.5px;"></div><span class="a t" style="left: 182.7px; top: 592.7px; font-size: 10px; line-height: 10px; height: 10px; font-weight: bold; color: rgb(46, 110, 158); letter-spacing: 0.142px;">R. löschen</span>
<div class="a btn" style="left:278.4px;top:588px;width:99.2px;height:19.5px;"></div><span class="a t" style="left: 288.77px; top: 592.7px; font-size: 10px; line-height: 10px; height: 10px; font-weight: bold; color: rgb(46, 110, 158); letter-spacing: 0.118px;">Redaktion/Texte</span>
<div class="a btn" style="left:383.1px;top:588px;width:101.3px;height:19.5px;"></div><span class="a t" style="left: 393.65px; top: 592.7px; font-size: 10px; line-height: 10px; height: 10px; font-weight: bold; color: rgb(46, 110, 158); letter-spacing: 0.036px;">Buchung starten</span>
<div class="a btn" style="left:489.4px;top:588px;width:65.3px;height:19.5px;"></div><span class="a t" style="left: 499.95px; top: 592.7px; font-size: 10px; line-height: 10px; height: 10px; font-weight: bold; color: rgb(46, 110, 158); letter-spacing: 0.194px;">Preistab.</span>
<div class="a btn" style="left:560.2px;top:588px;width:67.5px;height:19.5px;"></div><span class="a t" style="left: 570.72px; top: 592.7px; font-size: 10px; line-height: 10px; height: 10px; font-weight: bold; color: rgb(46, 110, 158); letter-spacing: 0.178px;">Vorschau</span>
<div class="a btn" style="left:632.5px;top:588px;width:127.2px;height:19.5px;"></div><span class="a t" style="left: 643px; top: 592.7px; font-size: 10px; line-height: 10px; height: 10px; font-weight: bold; color: rgb(46, 110, 158); letter-spacing: 0.168px;">Speichern&amp;Schließen</span>
<div class="a btn" style="left:765.3px;top:588px;width:71.5px;height:19.5px;"></div><span class="a t" style="left: 775.95px; top: 592.7px; font-size: 10px; line-height: 10px; height: 10px; font-weight: bold; color: rgb(46, 110, 158); letter-spacing: 0.182px;">Speichern</span>
<div class="a btn" style="left:842px;top:588px;width:77px;height:19.5px;"></div><span class="a t" style="left: 852.9px; top: 592.7px; font-size: 10px; line-height: 10px; height: 10px; font-weight: bold; color: rgb(46, 110, 158); letter-spacing: 0.273px;">Schliessen</span>
<svg class="a" style="left:909px;top:602px" width="16" height="12"><g stroke="#5c8fbd" stroke-width="1"><path d="M15.5 0.5L4 12M15.5 4.5L8 12M15.5 8.5L12 12"></path></g></svg>
<div class="a" style="left:0px;top:3px;width:933px;height:615px;background:rgba(170,170,170,.3)"></div>
<div class="a" style="left:261px;top:156px;width:407px;height:307px;border:1px solid #a6c9e2;border-radius:6px;background:#fff"></div>
<div class="a hdr" style="left:264px;top:159px;width:400px;height:26px;"><i style="clip-path:polygon(0 0,100% 0,100.0% 18.5px,95.0% 18.8px,90.0% 19.0px,85.0% 19.2px,80.0% 19.4px,75.0% 19.5px,70.0% 19.3px,65.0% 18.9px,60.0% 18.4px,55.0% 17.3px,50.0% 16.0px,45.0% 14.9px,40.0% 14.0px,35.0% 13.5px,30.0% 13.2px,25.0% 13.0px,20.0% 13.2px,15.0% 13.4px,10.0% 13.9px,5.0% 14.4px,0.0% 15.1px)"></i></div>
<span class="a t" style="left: 268.5px; top: 166px; font-size: 11px; line-height: 11px; height: 11px; font-weight: bold; color: rgb(255, 255, 255); letter-spacing: 0.003px;">Reise exportieren</span>
<svg class="a" style="left:644px;top:167px" width="11" height="11" viewBox="0 0 11 11"><path d="M1.8 1.8L9.2 9.2M9.2 1.8L1.8 9.2" stroke="#e4eef7" stroke-width="2.4"></path></svg>
<div class="a fs" style="left:269px;top:193px;width:389px;height:210px;"></div><div class="a" style="left:279.5px;top:187px;width:35.5px;height:13px;background:#fff"></div><span class="a t" style="left: 281.2px; top: 189px; font-size: 11px; line-height: 11px; height: 11px; letter-spacing: -0.133px;">Export</span>
<span class="a t" style="left: 282px; top: 209px; font-size: 11px; line-height: 11px; height: 11px; color: rgb(0, 0, 0); letter-spacing: -0.15px;">Neben den Produktdaten und Varianten können noch folgende Bestandteile</span>
<span class="a t" style="left: 282px; top: 222px; font-size: 11px; line-height: 11px; height: 11px; color: rgb(0, 0, 0); letter-spacing: -0.097px;">exportiert werden:</span>
<span class="a t" style="left: 282px; top: 251.5px; font-size: 11px; line-height: 11px; height: 11px; color: rgb(0, 0, 0); letter-spacing: -0.062px;">Quartiere</span>
<span class="a t" style="left: 282px; top: 275.5px; font-size: 11px; line-height: 11px; height: 11px; color: rgb(0, 0, 0); letter-spacing: -0.188px;">Bilder</span>
<span class="a t" style="left: 282px; top: 299.5px; font-size: 11px; line-height: 11px; height: 11px; color: rgb(0, 0, 0); letter-spacing: -0.126px;">Einkaufsdaten (Vertrag)</span>
<span class="a t" style="left: 282px; top: 323.5px; font-size: 11px; line-height: 11px; height: 11px; color: rgb(0, 0, 0); letter-spacing: -0.193px;">Verküpfte Zusatzleistungen</span>
<span class="a t" style="left: 282px; top: 347.5px; font-size: 11px; line-height: 11px; height: 11px; color: rgb(0, 0, 0); letter-spacing: -0.221px;">Einkaufsdaten Zusatzleistungen</span>
<div class="a" style="left:532px;top:252px;width:18px;height:18px;border-radius:4px;background:#fde9df;border:1px solid #f4a680"></div>
<div class="a cbo" style="left:535px;top:255px;width:12px;height:12px;"><svg width="16" height="14" viewBox="0 -2 16 14" style="position:absolute;left:-1px;top:-3px;overflow:visible"><path d="M1.5 6.1L3.2 4.4L5.6 7.1L12.9 -0.6L13.7 0.2L5.8 10.2Z" fill="#7d3b27"></path></svg></div>
<div class="a cbo" style="left:535px;top:279px;width:12px;height:12px;"><svg width="16" height="14" viewBox="0 -2 16 14" style="position:absolute;left:-1px;top:-3px;overflow:visible"><path d="M1.5 6.1L3.2 4.4L5.6 7.1L12.9 -0.6L13.7 0.2L5.8 10.2Z" fill="#7d3b27"></path></svg></div>
<div class="a cb" style="left:535px;top:303px;width:12px;height:12px;"></div>
<div class="a cb" style="left:535px;top:327px;width:12px;height:12px;"></div>
<div class="a cb" style="left:535px;top:351px;width:12px;height:12px;"></div>
<div class="a inp" style="left:530px;top:371px;width:66px;height:18.5px;"></div>
<span class="a t" style="left: 535.5px; top: 375px; font-size: 11px; line-height: 11px; height: 11px; color: rgb(51, 51, 51); letter-spacing: -0.179px;">Exportieren</span>
<div class="a" style="left:265px;top:425px;width:399px;height:1px;background:#a6c9e2"></div>
<div class="a btn" style="left:588px;top:433px;width:71px;height:19.5px;"></div><span class="a t" style="left: 598.9px; top: 437.7px; font-size: 10px; line-height: 10px; height: 10px; font-weight: bold; color: rgb(46, 110, 158); letter-spacing: 0.194px;">Schließen</span>
<svg class="a" style="left:653px;top:448px" width="12" height="12"><g stroke="#5c8fbd" stroke-width="1"><path d="M11.5 0.5L0.5 11.5M11.5 4.5L4.5 11.5M11.5 8.5L8.5 11.5"></path></g></svg>
<div class="a" style="left:4px;top:565px;width:91px;height:60px;border:5px solid #5b9a0c;border-radius:3px"></div>
<span class="a" style="left:74.2px;top:599px;font-family:'DejaVu Sans Mono',monospace;font-size:13px;line-height:16px;transform:scaleY(1.1);transform-origin:0 12px;color:#5b9a0c;white-space:nowrap">1.</span>
<svg class="a" style="left:462.5px;top:316.6px;filter:drop-shadow(0.5px 0.8px 0.6px rgba(0,0,0,.35))" width="14" height="22" viewBox="0 0 14 22"><path d="M0.9 0.9V18L4.7 14.4L6.6 18.9Q7.4 20.2 8.7 19.5Q9.8 18.8 9.3 17.6L7.3 12.8H11.4z" fill="#fff" stroke="#000" stroke-width="1.3" stroke-linejoin="miter"></path></svg>
</body></html>
